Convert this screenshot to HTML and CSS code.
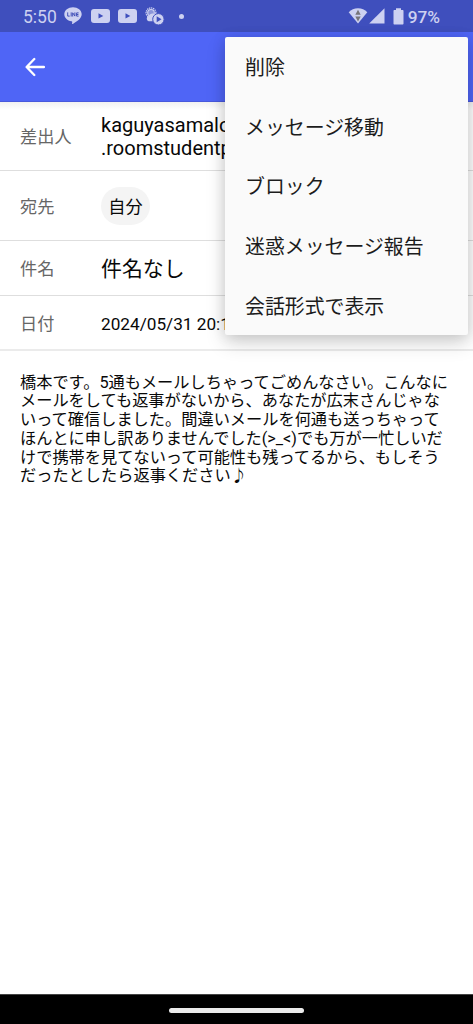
FILE: index.html
```html
<!DOCTYPE html>
<html lang="ja">
<head>
<meta charset="utf-8">
<title>メッセージ</title>
<link rel="stylesheet" href="styles.css">
</head>
<body>
<div class="screen">
  <div class="status">
    <span class="clock">5:50</span>
    <svg class="ico-line" width="18" height="18" viewBox="0 0 18 18"><path fill="#cdd1f1" d="M9 .2C4.200 .2.300 3.300.300 7.300c0 3.500 3 6.400 7.200 7 .9.200.8.600.6 2.200-.1.700.2.700.8.400 3.500-2 8.800-5.300 8.800-9.600C17.700 3.300 13.800.2 9 .2z"/><g fill="none" stroke="#4250b8" stroke-width="1"><path d="M3.700 5.400v3.700h2M7.200 5.400v4.100M8.700 9.500V5.800l2.200 3.300V5.400M14.600 5.900h-2v3.200h2M12.600 7.500h1.800"/></g></svg>
    <svg class="ico-tube" width="19" height="14" viewBox="0 0 19 14"><rect width="19" height="14" rx="3" fill="#cdd1f1"/><path fill="#3f4fbd" d="M7.500 4.300v5.200l4.800-2.600z"/></svg>
    <svg class="ico-tube second" width="19" height="14" viewBox="0 0 19 14"><rect width="19" height="14" rx="3" fill="#cdd1f1"/><path fill="#3f4fbd" d="M7.500 4.300v5.200l4.800-2.600z"/></svg>
    <svg class="ico-weather" width="20" height="19" viewBox="0 0 20 19"><circle cx="6" cy="5.800" r="4.900" fill="none" stroke="#cdd1f1" stroke-width="1.300" stroke-dasharray="1.300 .75"/><circle cx="6" cy="5.800" r="3.300" fill="#8b95d9" stroke="#cdd1f1" stroke-width="1.200"/><path fill="#cdd1f1" d="M3.600 14.300a2.700 2.700 0 0 1 .2-5.200A4 4 0 0 1 11 8.300l-2 6z"/><circle cx="13.400" cy="12.300" r="5.700" fill="#cdd1f1" stroke="#3f4fbd"/><path fill="#3f4fbd" d="M11.700 9.300v6l4.800-3z"/></svg>
    <span class="dot"></span>
    <span class="spacer"></span>
    <svg class="ico-wifi" width="20" height="16" viewBox="0 0 20 16"><path fill="#cdd1f1" d="M10 15.500.7 4.200C3.200 1.700 6.300.2 10 .2s6.800 1.500 9.300 4z"/><path fill="#777579" d="m10 1.700 2.700 5H7.300zM7.300 8.600h5.400l-2.700 5z"/></svg>
    <svg class="ico-signal" width="16" height="16" viewBox="0 0 16 16"><path fill="#cdd1f1" d="M15.500.3v15.200H.2z"/></svg>
    <svg class="ico-battery" width="11" height="17" viewBox="0 0 11 17"><path fill="#cdd1f1" d="M3 .2h5v1.700h1.500c.6 0 1 .4 1 1v12.500c0 .6-.4 1-1 1h-8c-.6 0-1-.4-1-1V2.900c0-.6.4-1 1-1H3z"/></svg>
    <span class="percent">97%</span>
  </div>
  <header class="toolbar">
    <svg width="20" height="20" viewBox="0 0 20 20"><path d="M18.900 10H1.800M9.300 2 1.600 10l7.700 8" fill="none" stroke="#fff" stroke-width="2.300" stroke-linecap="round" stroke-linejoin="round"/></svg>
  </header>
  <main class="content">
    <dl class="row sender"><dt>差出人</dt><dd>kaguyasamalo<br>.roomstudentp</dd></dl>
    <dl class="row recipient"><dt>宛先</dt><dd><span class="chip">自分</span></dd></dl>
    <dl class="row subject"><dt>件名</dt><dd>件名なし</dd></dl>
    <dl class="row date"><dt>日付</dt><dd>2024/05/31 20:1</dd></dl>
    <p class="message">橋本です。5通もメールしちゃってごめんなさい。こんなに<br>メールをしても返事がないから、あなたが広末さんじゃな<br>いって確信しました。間違いメールを何通も送っちゃって<br>ほんとに申し訳ありませんでした(&gt;_&lt;)でも万が一忙しいだ<br>けで携帯を見てないって可能性も残ってるから、もしそう<br>だったとしたら返事ください♪</p>
  </main>
  <div class="navbar"><span class="handle"></span></div>
  <ul class="menu">
    <li>削除</li>
    <li>メッセージ移動</li>
    <li>ブロック</li>
    <li>迷惑メッセージ報告</li>
    <li>会話形式で表示</li>
  </ul>
</div>
</body>
</html>
```
FILE: styles.css
```css
* { box-sizing: border-box; }
body { margin: 0; font-family: Roboto, "Noto Sans CJK JP", sans-serif; color: #080808; }
.screen { position: relative; display: flex; flex-direction: column; width: 473px; height: 1024px; overflow: hidden; background: #fff; }

.status { display: flex; align-items: center; height: 32px; flex: none; padding: 0 33px 0 23px; background: #3f4fbd; color: #cdd1f1; font-size: 17.5px; line-height: 32px; }
.status svg { flex: none; }
.clock { width: 41px; padding-top: 2px; }
.ico-tube { margin-left: 9px; }
.ico-tube.second { margin-left: 8px; }
.ico-weather { margin: 1px 0 0 8px; }
.dot { width: 5px; height: 5px; margin-left: 14px; border-radius: 50%; background: #cdd1f1; }
.spacer { flex: 1; }
.ico-signal { margin-left: 1px; }
.ico-battery { margin-left: 8px; }
.percent { margin-left: 4px; padding-top: 2px; font-size: 17.300px; font-weight: 500; }

.toolbar { display: flex; align-items: center; flex: none; height: 69.500px; padding: 1px 0 0 25px; background: #4f65f6; border-bottom: 1px solid #4859dc; }
.content { flex: 1; background: linear-gradient(#f1f1f1, #fff 8px); }

.row { display: flex; align-items: center; margin: 0; border-bottom: 1px solid #dedede; }
.row dt { padding: 2px 0 0 20px; flex: 0 0 101px; color: #666; font-size: 17.200px; line-height: 24px; }
.row dd { margin: 0; white-space: nowrap; }
.sender { height: 69.500px; }
.sender dd { font-size: 20px; line-height: 23.500px; padding-top: 3px; }
.recipient { height: 70px; }
.chip { display: block; width: 49px; height: 38px; border-radius: 19px; background: #f4f4f4; font-size: 17.200px; line-height: 40px; text-align: center; }
.subject { height: 55px; }
.subject dd { padding-top: 2px; font-size: 20.900px; line-height: 28px; }
.date { height: 55px; border-bottom: 2px solid #ebebeb; }
.date dd { padding-top: 2px; font-size: 17.200px; line-height: 24px; }
.message { margin: 22.500px 0 0 20px; font-size: 16.220px; line-height: 18.800px; white-space: nowrap; }

.navbar { display: flex; justify-content: center; flex: none; height: 30px; padding-top: 13px; background: #000; border-top: 1px solid #444; }
.handle { width: 135px; height: 5px; border-radius: 3px; background: #ebebeb; }

.menu { position: absolute; top: 37px; left: 225px; width: 243px; height: 298px; margin: 0; padding: 2px 0 0 20px; list-style: none; border-radius: 2px; background: #fafafa; color: #1c1c1c; font-size: 19.900px; box-shadow: 0 8px 20px rgba(0, 0, 0, .16), 0 1px 14px rgba(0, 0, 0, .12); }
.menu li { height: 59.700px; line-height: 59.700px; }
```
